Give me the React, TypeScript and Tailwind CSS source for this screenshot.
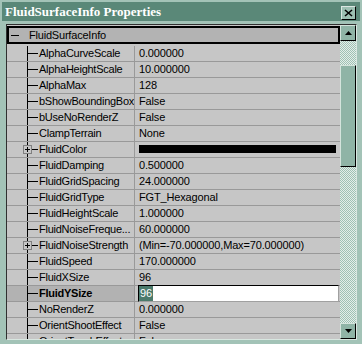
import React from 'react';

type Row = {
  name: string;
  value?: string;
  expandable?: boolean;
  color?: boolean;
  selected?: boolean;
};

const rows: Row[] = [
  { name: 'AlphaCurveScale', value: '0.000000' },
  { name: 'AlphaHeightScale', value: '10.000000' },
  { name: 'AlphaMax', value: '128' },
  { name: 'bShowBoundingBox', value: 'False' },
  { name: 'bUseNoRenderZ', value: 'False' },
  { name: 'ClampTerrain', value: 'None' },
  { name: 'FluidColor', expandable: true, color: true },
  { name: 'FluidDamping', value: '0.500000' },
  { name: 'FluidGridSpacing', value: '24.000000' },
  { name: 'FluidGridType', value: 'FGT_Hexagonal' },
  { name: 'FluidHeightScale', value: '1.000000' },
  { name: 'FluidNoiseFreque...', value: '60.000000' },
  { name: 'FluidNoiseStrength', value: '(Min=-70.000000,Max=70.000000)', expandable: true },
  { name: 'FluidSpeed', value: '170.000000' },
  { name: 'FluidXSize', value: '96' },
  { name: 'FluidYSize', value: '96', selected: true },
  { name: 'NoRenderZ', value: '0.000000' },
  { name: 'OrientShootEffect', value: 'False' },
  { name: 'OrientTouchEffect', value: 'False' },
];

function PropertyRow({ row }: { row: Row }) {
  const leftBg = row.selected ? 'bg-[#b2b2b2]' : 'bg-[#c6c6c6]';
  return (
    <div className="flex h-4 shrink-0 border-b border-[#999999]">
      {/* gutter + tree line */}
      <div className={`relative w-[21px] shrink-0 border-r border-black ${leftBg}`}>
        {row.expandable && (
          <span className="absolute left-[16px] top-[3px] flex h-[9px] w-[9px] items-center justify-center border border-[#808080] bg-[#c6c6c6]">
            <span className="absolute h-px w-[5px] bg-black" />
            <span className="absolute h-[5px] w-px bg-black" />
          </span>
        )}
      </div>
      <div className={`flex w-[10px] shrink-0 ${leftBg}`}>
        <div className="mt-[7px] h-px w-full bg-black" />
      </div>
      <div
        className={`w-[96px] shrink-0 overflow-hidden whitespace-nowrap pl-[1px] leading-[15px] tracking-[-0.25px] ${leftBg} ${
          row.selected ? 'font-bold' : ''
        }`}
      >
        {row.name}
      </div>
      <div className="relative flex-1 overflow-visible whitespace-nowrap border-l border-[#999999] bg-[#c6c6c6] pl-[4px] leading-[15px] tracking-[-0.15px]">
        {row.color && <div className="mt-[3px] h-[8px] w-[197px] bg-black" />}
        {row.selected ? (
          <div className="absolute left-[3px] top-[-1px] z-10 flex h-[17px] w-[201px] border-t border-l border-black border-r border-b border-r-[#a0a0a0] border-b-[#a0a0a0] bg-white leading-[15px]">
            <span className="bg-[#4b7a6b] px-[1px] text-white">{row.value}</span>
          </div>
        ) : (
          !row.color && row.value
        )}
      </div>
    </div>
  );
}

function ScrollButton({ down }: { down?: boolean }) {
  return (
    <div className="flex h-4 w-4 shrink-0 items-center justify-center border border-t-[#d4e4dc] border-l-[#d4e4dc] border-r-black border-b-black bg-[#8fb4a6]">
      {down ? (
        <svg width="7" height="4" viewBox="0 0 7 4">
          <path d="M0 0h7L3.5 4z" fill="black" />
        </svg>
      ) : (
        <svg width="7" height="4" viewBox="0 0 7 4">
          <path d="M0 4h7L3.5 0z" fill="black" />
        </svg>
      )}
    </div>
  );
}

export default function App() {
  return (
    <div className="h-[344px] w-[362px] overflow-hidden bg-[#a3c3b7] pt-[2px] font-['Liberation_Sans',sans-serif] text-[11px] text-black">
      {/* title bar */}
      <div className="mx-[2px] flex h-[19px] items-center justify-between bg-[#5a8878] pl-[3px] pr-[4px]">
        <span className="font-['Liberation_Serif',serif] text-[13px] font-bold leading-none text-white">
          FluidSurfaceInfo Properties
        </span>
        <button className="mt-[3px] flex h-[14px] w-[15px] items-center justify-center border border-t-[#dbe8e2] border-l-[#dbe8e2] border-r-black border-b-black bg-[#9cc0b2]">
          <svg width="9" height="8" viewBox="0 0 9 8">
            <path d="M1 1l7 6M8 1L1 7" stroke="black" strokeWidth="1.6" />
          </svg>
        </button>
      </div>

      {/* frame */}
      <div className="ml-[6px] mt-[3px] flex h-[316px] w-[351px] border border-t-[#303030] border-l-[#303030] border-r-[#d8e6e0] border-b-[#d8e6e0]">
        {/* list */}
        <div className="flex w-[333px] flex-col overflow-hidden bg-[#c6c6c6]">
          <div className="mt-[1px] mb-[2px] flex h-[18px] shrink-0 items-center border-2 border-black bg-[#b3b3b3]">
            <div className="ml-[2px] h-px w-[8px] bg-black" />
            <span className="ml-[10px] leading-[14px] tracking-[-0.2px]">FluidSurfaceInfo</span>
          </div>
          {rows.map((r) => (
            <PropertyRow key={r.name} row={r} />
          ))}
        </div>

        {/* scrollbar */}
        <div className="flex w-4 flex-col bg-[image:repeating-conic-gradient(#9fc1b4_0%_25%,#e4eee9_0%_50%)] bg-[length:2px_2px]">
          <ScrollButton />
          <div className="h-[24px] shrink-0" />
          <div className="h-[102px] shrink-0 border border-t-[#d4e4dc] border-l-[#d4e4dc] border-r-black border-b-black bg-[#8fb4a6]" />
          <div className="flex-1" />
          <ScrollButton down />
        </div>
      </div>
    </div>
  );
}
